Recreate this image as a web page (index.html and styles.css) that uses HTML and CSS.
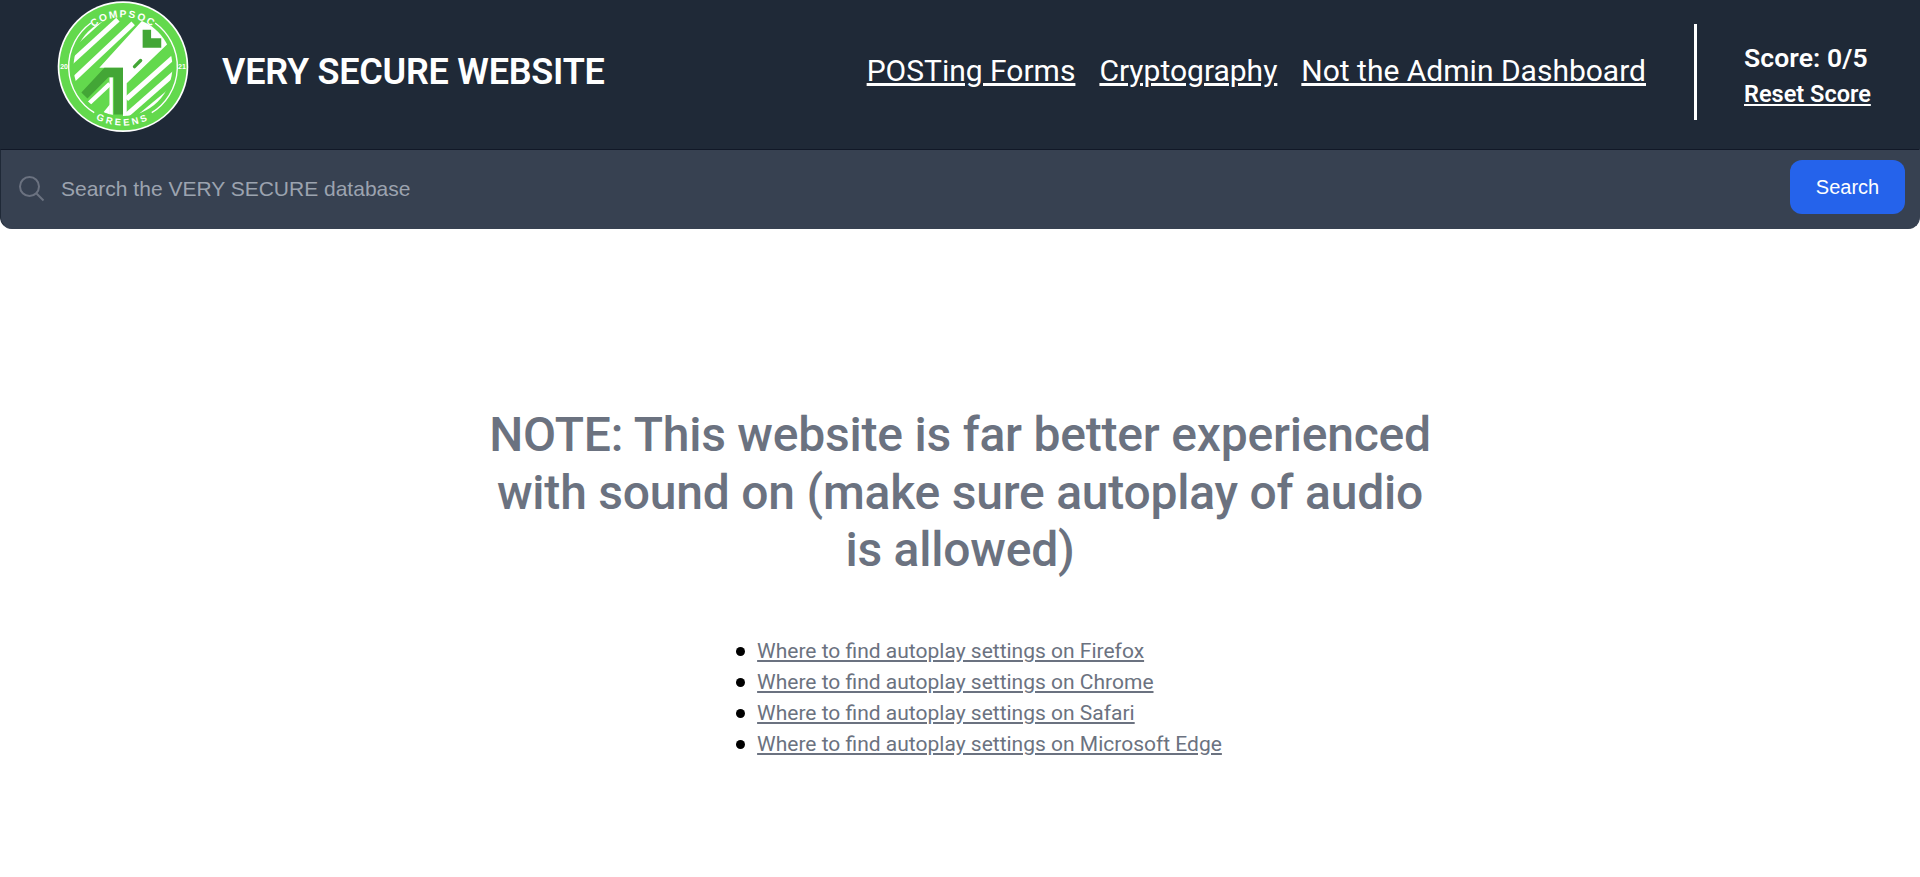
FILE: index.html
```html
<!DOCTYPE html>
<html lang="en">
<head>
<meta charset="utf-8">
<title>VERY SECURE WEBSITE</title>
<link rel="stylesheet" href="styles.css">
</head>
<body>
<header class="topbar">
  <div class="brand">
    <svg class="logo" viewBox="0 0 390 390" aria-label="CompSoc Greens 2021 logo">
      <defs>
        <clipPath id="disk"><circle cx="195" cy="194" r="146"/></clipPath>
        <path id="arcTop" d="M 49 194 A 146 146 0 0 1 341 194"/>
        <path id="arcBottom" d="M 21 194 A 174 174 0 0 0 369 194"/>
      </defs>
      <circle cx="195" cy="194" r="193" fill="#fff"/>
      <circle cx="195" cy="194" r="188" fill="#63d94d"/>
      <path class="ring" d="M 100 65 A 160 160 0 0 0 110 330"/>
      <path class="ring" d="M 290 65 A 160 160 0 0 1 280 330"/>
      <g clip-path="url(#disk)">
        <path class="band" d="M 30 250 L 225 66"/>
        <path class="band" d="M 30 192 L 180 55"/>
        <path class="band" d="M 40 136 L 135 50"/>
        <path class="band" d="M 205 290 L 360 152"/>
        <path class="band" d="M 205 338 L 360 202"/>
        <path class="band" d="M 240 345 L 360 245"/>
        <path class="center" d="M 125 197 L 250 60 L 268 45 L 360 95 L 206 243 V 350 H 195 V 197 Z"/>
        <path class="band thin" d="M 92 305 L 156 245"/>
        <path class="band narrow" d="M 160 225 V 350"/>
        <path class="center" d="M 132 335 L 156 306 V 350 H 132 Z"/>
      </g>
      <path class="mark" d="M72 270 L140 197 H195 V335 H168 V225 H152 L90 288 Z"/>
      <path class="mark" d="M253 85 H278 V110 H308 V138 H253 Z"/>
      <path class="dash" d="M229 194 L247 176"/>
      <text class="logo-text" letter-spacing="5"><textPath href="#arcTop" startOffset="50%" text-anchor="middle">COMPSOC</textPath></text>
      <text class="logo-text logo-text-low" letter-spacing="8"><textPath href="#arcBottom" startOffset="50%" text-anchor="middle">GREENS</textPath></text>
      <text class="logo-year" x="21" y="201">20</text>
      <text class="logo-year" x="369" y="201">21</text>
    </svg>
    <span class="site-title">VERY SECURE WEBSITE</span>
  </div>
  <nav class="nav">
    <a href="#">POSTing Forms</a>
    <a href="#">Cryptography</a>
    <a href="#">Not the Admin Dashboard</a>
  </nav>
  <div class="score">
    <span class="score-value">Score: 0/5</span>
    <a class="score-reset" href="#">Reset Score</a>
  </div>
</header>
<form class="search">
  <svg class="search-icon" viewBox="0 0 28 28" aria-hidden="true">
    <circle cx="11.5" cy="11.5" r="9.5"/>
    <path d="M18.5 18.5 L25.5 25.5"/>
  </svg>
  <input class="search-input" type="text" placeholder="Search the VERY SECURE database">
  <button class="search-button" type="button">Search</button>
</form>
<main class="content">
  <h1 class="notice">NOTE: This website is far better experienced with sound on (make sure autoplay of audio is allowed)</h1>
  <ul class="help-list">
    <li><a href="#">Where to find autoplay settings on Firefox</a></li>
    <li><a href="#">Where to find autoplay settings on Chrome</a></li>
    <li><a href="#">Where to find autoplay settings on Safari</a></li>
    <li><a href="#">Where to find autoplay settings on Microsoft Edge</a></li>
  </ul>
</main>
</body>
</html>
```
FILE: styles.css
```css
* { box-sizing: border-box; }
html, body { height: 100%; }
body {
  margin: 0;
  background: #fff;
  font-family: Roboto, "Liberation Sans", sans-serif;
  overflow: hidden;
}
.topbar {
  height: 149px;
  background: #1f2937;
  display: flex;
  align-items: center;
  padding: 0 48px 5px 57px;
  color: #fff;
}
.brand { display: flex; align-items: center; gap: 33px; margin-right: auto; }
.logo { width: 132px; height: 132px; display: block; margin: -5px 0 5px; }
.ring { fill: none; stroke: #fff; stroke-width: 4; }
.band { fill: none; stroke: #fff; stroke-width: 15; }
.band.thin { stroke-width: 13; }
.band.narrow { stroke-width: 10; }
.center { fill: #fff; }
.mark { fill: #43a636; }
.dash { fill: none; stroke: #43a636; stroke-width: 10; stroke-linecap: round; }
.logo-text { fill: #fff; font-family: "Liberation Sans", sans-serif; font-weight: 700; font-size: 30px; }
.logo-text-low { font-size: 28px; }
.logo-year { fill: #fff; font-family: "Liberation Sans", sans-serif; font-weight: 700; font-size: 21px; text-anchor: middle; }
.site-title { font-size: 36px; font-weight: 600; letter-spacing: -0.25px; }
.nav { display: flex; gap: 24px; font-size: 30px; margin-bottom: 3px; }
.nav a { color: #fff; }
.score {
  margin-left: 48px;
  border-left: 3px solid #fff;
  height: 96px;
  padding: 5px 0 0 47px;
  display: flex;
  flex-direction: column;
  justify-content: center;
  gap: 7px;
  width: 178px;
  white-space: nowrap;
}
.score-value { font-size: 26.5px; font-weight: 600; letter-spacing: 0.1px; }
.score-reset { font-size: 23.5px; font-weight: 600; color: #fff; }
.search {
  height: 80px;
  background: #374151;
  border: 1px solid #111827;
  border-color: #111827 #374151 #374151 #1f2937;
  border-radius: 0 0 12px 12px;
  display: flex;
  align-items: center;
  padding: 0 14px 0 17px;
}
.search-icon { width: 28px; height: 28px; flex: none; fill: none; stroke: #6b7280; stroke-width: 2; }
.search-input {
  flex: 1;
  margin-left: 13px;
  background: transparent;
  border: 0;
  outline: 0;
  color: #fff;
  font-family: "Liberation Sans", sans-serif;
  font-size: 21px;
}
.search-input::placeholder { color: #9ca3af; opacity: 1; }
.search-button {
  width: 115px;
  height: 54px;
  margin-bottom: 4px;
  background: #2563eb;
  color: #fff;
  border: 0;
  border-radius: 12px;
  font-family: "Liberation Sans", sans-serif;
  font-size: 20px;
}
.content {
  display: flex;
  flex-direction: column;
  align-items: center;
  padding-top: 177px;
  color: #6b7280;
}
.notice {
  width: 960px;
  margin: 0;
  text-align: center;
  font-size: 48px;
  line-height: 57.6px;
  font-weight: 500;
  letter-spacing: -0.22px;
}
.help-list {
  margin: 57px 0 0 38px;
  padding: 0;
  list-style: none;
  font-size: 21px;
  line-height: 31px;
}
.help-list li { display: flex; align-items: center; gap: 12px; }
.help-list li::before {
  content: "";
  width: 9px;
  height: 9px;
  border-radius: 50%;
  background: #000;
}
.help-list a { color: #6b7280; }
```
